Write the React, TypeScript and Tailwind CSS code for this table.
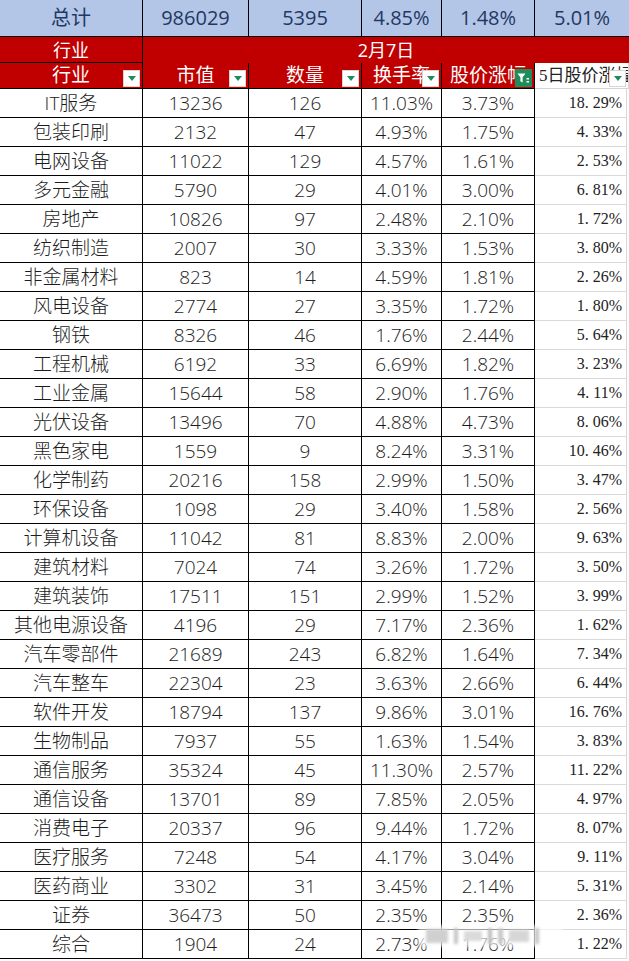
type Row = [string, number, number, string, string, string]

const rows: Row[] = [
  ['IT服务', 13236, 126, '11.03%', '3.73%', '18.29%'],
  ['包装印刷', 2132, 47, '4.93%', '1.75%', '4.33%'],
  ['电网设备', 11022, 129, '4.57%', '1.61%', '2.53%'],
  ['多元金融', 5790, 29, '4.01%', '3.00%', '6.81%'],
  ['房地产', 10826, 97, '2.48%', '2.10%', '1.72%'],
  ['纺织制造', 2007, 30, '3.33%', '1.53%', '3.80%'],
  ['非金属材料', 823, 14, '4.59%', '1.81%', '2.26%'],
  ['风电设备', 2774, 27, '3.35%', '1.72%', '1.80%'],
  ['钢铁', 8326, 46, '1.76%', '2.44%', '5.64%'],
  ['工程机械', 6192, 33, '6.69%', '1.82%', '3.23%'],
  ['工业金属', 15644, 58, '2.90%', '1.76%', '4.11%'],
  ['光伏设备', 13496, 70, '4.88%', '4.73%', '8.06%'],
  ['黑色家电', 1559, 9, '8.24%', '3.31%', '10.46%'],
  ['化学制药', 20216, 158, '2.99%', '1.50%', '3.47%'],
  ['环保设备', 1098, 29, '3.40%', '1.58%', '2.56%'],
  ['计算机设备', 11042, 81, '8.83%', '2.00%', '9.63%'],
  ['建筑材料', 7024, 74, '3.26%', '1.72%', '3.50%'],
  ['建筑装饰', 17511, 151, '2.99%', '1.52%', '3.99%'],
  ['其他电源设备', 4196, 29, '7.17%', '2.36%', '1.62%'],
  ['汽车零部件', 21689, 243, '6.82%', '1.64%', '7.34%'],
  ['汽车整车', 22304, 23, '3.63%', '2.66%', '6.44%'],
  ['软件开发', 18794, 137, '9.86%', '3.01%', '16.76%'],
  ['生物制品', 7937, 55, '1.63%', '1.54%', '3.83%'],
  ['通信服务', 35324, 45, '11.30%', '2.57%', '11.22%'],
  ['通信设备', 13701, 89, '7.85%', '2.05%', '4.97%'],
  ['消费电子', 20337, 96, '9.44%', '1.72%', '8.07%'],
  ['医疗服务', 7248, 54, '4.17%', '3.04%', '9.11%'],
  ['医药商业', 3302, 31, '3.45%', '2.14%', '5.31%'],
  ['证券', 36473, 50, '2.35%', '2.35%', '2.36%'],
  ['综合', 1904, 24, '2.73%', '1.76%', '1.22%'],
]

const grid = 'grid grid-cols-[143px_106px_113px_80px_93px_94px]'
const sans = "font-['Open_Sans','Noto_Sans_CJK_SC',sans-serif]"
const serif = "font-['Liberation_Serif','Noto_Sans_CJK_SC',serif]"

function DropButton() {
  return (
    <span className="absolute right-[2px] bottom-[1px] flex h-[17px] w-[17px] items-center justify-center border border-[#d6d6d6] bg-white">
      <svg width="8" height="5" viewBox="0 0 8 5">
        <path d="M0 0h8L4 5Z" fill="#1f8c5c" />
      </svg>
    </span>
  )
}

function ActiveFilter() {
  return (
    <span className="absolute right-[2px] bottom-[1px] flex h-[18px] w-[17px] items-center justify-center bg-[#1f8c5c]">
      <svg width="13" height="12" viewBox="0 0 13 12">
        <path d="M0.5 1.5h8L5.6 5.2V10.5L3.4 9.2V5.2Z" fill="#fff" />
        <rect x="9.5" y="6" width="2.5" height="1.5" fill="#fff" />
        <rect x="9.5" y="9" width="2.5" height="1.5" fill="#fff" />
      </svg>
    </span>
  )
}

function HeadCell({ label, active }: { label: string; active?: boolean }) {
  return (
    <div className="relative flex items-center justify-center overflow-hidden border-r border-b border-black bg-[#c00000] text-white whitespace-nowrap">
      <span>{label}</span>
      {active ? <ActiveFilter /> : <DropButton />}
    </div>
  )
}

function Pct({ v }: { v: string }) {
  const [a, b] = v.split('.')
  return (
    <span>
      {a}.<span className="ml-[4px]">{b}</span>
    </span>
  )
}

export default function App() {
  return (
    <div className={`relative h-[961px] w-[629px] overflow-hidden bg-white text-[19px] ${sans}`}>
      {/* totals */}
      <div className={`${grid} h-[37px] bg-[#b4c6e7] text-[20px] text-[#1f3864]`}>
        {['总计', '986029', '5395', '4.85%', '1.48%', '5.01%'].map((t, i) => (
          <div
            key={i}
            className={`flex items-center justify-center border-b border-black ${i < 5 ? 'border-r' : ''}`}
          >
            {t}
          </div>
        ))}
      </div>

      {/* group header */}
      <div className={`${grid} h-[26px] bg-[#c00000] text-[18px] text-white`}>
        <div className="flex items-center justify-center border-r border-b border-black leading-none">行业</div>
        <div className="col-span-5 flex items-center justify-center leading-none">2月7日</div>
      </div>

      {/* column header */}
      <div className={`${grid} h-[26px] text-[19px] leading-none`}>
        <HeadCell label="行业" />
        <HeadCell label="市值" />
        <HeadCell label="数量" />
        <HeadCell label="换手率" />
        <HeadCell label="股价涨幅" active />
        <div className={`relative flex items-center overflow-hidden border-r border-b border-[#d4d4d4] bg-white pl-[4px] text-[17px] whitespace-nowrap text-[#222] ${serif}`}>
          <span>5日股价涨幅</span>
          <DropButton />
        </div>
      </div>

      {/* data */}
      {rows.map((r) => (
        <div key={r[0]} className={`${grid} h-[29px] font-light text-[#1c1c1c]`}>
          {[r[0], r[1], r[2], r[3], r[4]].map((c, i) => (
            <div key={i} className="flex items-center justify-center border-r border-b border-black leading-none whitespace-nowrap">
              {c}
            </div>
          ))}
          <div className={`mr-[2px] flex items-center justify-end border-r border-b border-[#d9d9d9] pr-[4px] text-[16px] font-normal text-[#222] ${serif}`}>
            <Pct v={r[5]} />
          </div>
        </div>
      ))}

      {/* watermark */}
      <div className="absolute top-[925px] left-[418px] flex h-[22px] w-[145px] items-center gap-[6px] rounded-sm bg-white/60 px-2 blur-[1.5px]">
        <span className="h-[14px] w-[22px] bg-[#d0d0d0]" />
        <span className="h-[16px] w-[4px] bg-[#c4c4c4]" />
        <span className="h-[10px] w-[18px] bg-[#dadada]" />
        <span className="h-[16px] w-[4px] bg-[#bdbdbd]" />
        <span className="h-[16px] w-[5px] bg-[#c8c8c8]" />
        <span className="h-[12px] w-[20px] bg-[#d6d6d6]" />
        <span className="h-[16px] w-[4px] bg-[#c4c4c4]" />
      </div>
    </div>
  )
}
